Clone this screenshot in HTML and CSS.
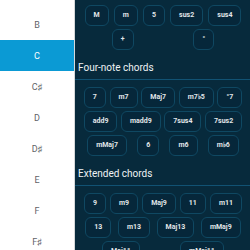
FILE: index.html
```html
<!DOCTYPE html>
<html>
<head>
<meta charset="utf-8">
<link rel="stylesheet" href="styles.css">
</head>
<body>
<div class="app">
  <ul class="notes">
    <li>B</li>
    <li class="active">C</li>
    <li>C♯</li>
    <li>D</li>
    <li>D♯</li>
    <li>E</li>
    <li>F</li>
    <li>F♯</li>
  </ul>
  <div class="chords">
    <div class="group first">
      <div class="row"><button>M</button><button>m</button><button>5</button><button>sus2</button><button>sus4</button></div>
      <div class="row"><button>+</button><button>°</button></div>
    </div>
    <h2 class="heading">Four-note chords</h2>
    <div class="group">
      <div class="row"><button>7</button><button>m7</button><button>Maj7</button><button>m7♭5</button><button>°7</button></div>
      <div class="row"><button>add9</button><button>madd9</button><button>7sus4</button><button>7sus2</button></div>
      <div class="row"><button>mMaj7</button><button>6</button><button>m6</button><button>m♭6</button></div>
    </div>
    <h2 class="heading">Extended chords</h2>
    <div class="group">
      <div class="row"><button>9</button><button>m9</button><button>Maj9</button><button>11</button><button>m11</button></div>
      <div class="row"><button>13</button><button>m13</button><button>Maj13</button><button>mMaj9</button></div>
      <div class="row"><button>Maj11</button><button>mMaj11</button></div>
    </div>
  </div>
</div>
</body>
</html>
```
FILE: styles.css
```css
html, body {
  margin: 0;
  padding: 0;
  width: 250px;
  height: 250px;
  overflow: hidden;
  font-family: Roboto, "Liberation Sans", sans-serif;
}
.app {
  display: flex;
  height: 250px;
}
.notes {
  list-style: none;
  margin: 0;
  padding: 9px 0 0;
  width: 74px;
  flex: none;
  background: #ffffff;
  border-right: 1px solid #d4d8da;
}
.notes li {
  height: 31px;
  display: flex;
  align-items: center;
  justify-content: center;
  font-size: 9px;
  color: #5f6368;
}
.notes li.active {
  background: #0b9ad4;
  color: #ffffff;
}
.chords {
  flex: 1;
  background: #072a3c;
  overflow: hidden;
}
.group {
  padding: 6px 6px 0 7px;
}
.group.first {
  padding-top: 3.5px;
}
.row {
  display: flex;
  justify-content: space-around;
}
.row button {
  height: 21px;
  margin: 1.5px 0;
  padding: 0 8px;
  box-sizing: border-box;
  border: 1px solid #0f4862;
  border-radius: 6px;
  background: #06273a;
  color: #e2e6e9;
  font-family: Roboto, "Liberation Sans", sans-serif;
  font-weight: bold;
  font-size: 7px;
  line-height: 19px;
}
.heading {
  margin: 0;
  padding: 10px 0 6px 3px;
  font-size: 10px;
  font-weight: normal;
  line-height: 11px;
  color: #eef2f4;
  border-bottom: 1.5px solid #115273;
}
```
